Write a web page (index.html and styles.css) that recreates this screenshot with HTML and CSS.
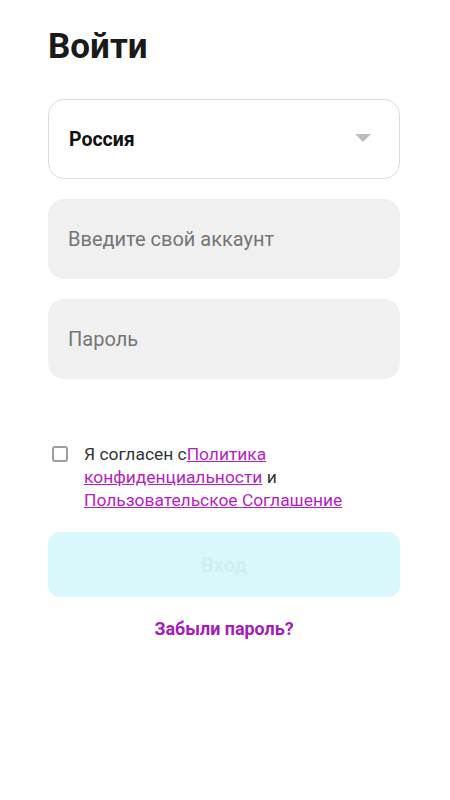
FILE: index.html
```html
<!DOCTYPE html>
<html lang="ru">
<head>
<meta charset="utf-8">
<link rel="stylesheet" href="styles.css">
</head>
<body>
<main class="page">
  <h1 class="title">Войти</h1>
  <div class="select">
    <span class="select-value">Россия</span>
    <svg class="caret" width="16" height="9" viewBox="0 0 16 9"><path d="M0 0H16L8 8Z" fill="#bdbdbd"/></svg>
  </div>
  <div class="field">Введите свой аккаунт</div>
  <div class="field">Пароль</div>
  <div class="agree">
    <span class="checkbox"></span>
    <p class="agree-text">Я согласен с<a href="#">Политика конфиденциальности</a> и <a href="#">Пользовательское Соглашение</a></p>
  </div>
  <button class="submit">Вход</button>
  <a class="forgot" href="#">Забыли пароль?</a>
</main>
</body>
</html>
```
FILE: styles.css
```css
* { box-sizing: border-box; }
html, body { margin: 0; background: #fff; }
body { font-family: Roboto, "Noto Sans", sans-serif; }
.page {
  display: flex;
  flex-direction: column;
  padding: 27px 50px 0 48px;
}
.title {
  margin: 0;
  font-size: 35px;
  font-weight: 700;
  color: #1a1a1a;
  line-height: 40px;
}
.select {
  margin-top: 32px;
  height: 80px;
  border: 1px solid #dcdcdc;
  border-radius: 16px;
  display: flex;
  align-items: center;
  justify-content: space-between;
  padding: 0 28px 0 20px;
}
.select-value { font-size: 19.5px; font-weight: 700; color: #111; }
.caret { margin-top: -2px; }
.field {
  margin-top: 20px;
  height: 80px;
  background: #f0f0f0;
  border-radius: 16px;
  display: flex;
  align-items: center;
  padding: 0 20px;
  font-size: 20px;
  color: #757575;
}
.agree {
  margin-top: 66px;
  display: flex;
  align-items: flex-start;
  gap: 16px;
  padding-left: 4px;
}
.checkbox {
  flex: none;
  width: 16px;
  height: 16px;
  margin-top: 1px;
  border: 2px solid #9e9e9e;
  border-radius: 3px;
}
.agree-text {
  margin: -2px 0 0;
  font-size: 17.4px;
  line-height: 23px;
  color: #333;
  width: 290px;
}
.agree-text a { color: #b51ec4; text-decoration: underline; }
.submit {
  margin-top: 20px;
  height: 65px;
  border: 0;
  border-radius: 12px;
  background: #d9f8fc;
  color: #ccf0f4;
  font-family: inherit;
  font-size: 20px;
  font-weight: 700;
}
.forgot {
  margin-top: 21px;
  align-self: center;
  font-size: 17.9px;
  font-weight: 700;
  color: #a51cb8;
  text-decoration: none;
}
```
